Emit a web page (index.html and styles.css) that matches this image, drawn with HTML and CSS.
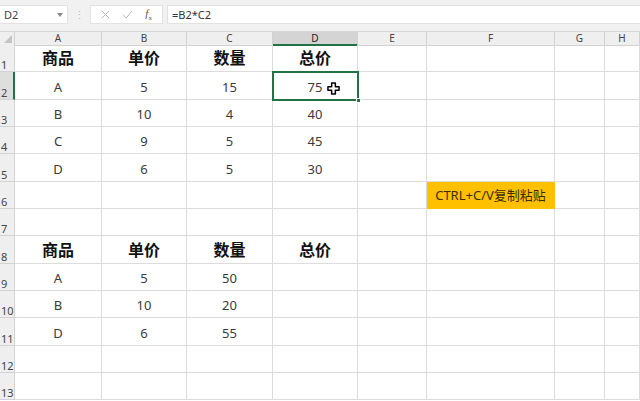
FILE: index.html
```html
<!DOCTYPE html>
<html lang="zh-CN">
<head>
    <meta charset="UTF-8">
    <title>Sheet1</title>
    <link rel="stylesheet" href="styles.css">
</head>
<body>
    <!-- Formula bar -->
    <div class="toolbar">
        <div class="name-box">
            <span>D2</span>
            <svg class="caret" viewBox="0 0 6 4" width="6" height="4"><path d="M0 0h6L3 4z" fill="#888"/></svg>
        </div>
        <div class="dots">⋮</div>
        <div class="fx-box">
            <svg viewBox="0 0 10 10" width="9" height="9"><path d="M1 1l8 8M9 1l-8 8" stroke="#b5b5b5" stroke-width="1.1" fill="none"/></svg>
            <svg viewBox="0 0 12 10" width="11" height="9"><path d="M1 5l3.5 4L11 1" stroke="#b5b5b5" stroke-width="1.1" fill="none"/></svg>
            <span class="fx"><i>f</i><sub>x</sub></span>
        </div>
        <div class="formula">=B2*C2</div>
    </div>

    <!-- Grid -->
    <div class="sheet">
        <div class="row head">
            <div class="corner"><svg viewBox="0 0 8 8" width="8" height="8"><path d="M8 0v8H0z" fill="#c4c4c4"/></svg></div>
            <div class="col">A</div><div class="col">B</div><div class="col">C</div><div class="col active">D</div>
            <div class="col">E</div><div class="col">F</div><div class="col">G</div><div class="col">H</div>
        </div>

        <div class="row">
            <div class="num">1</div>
            <div class="cell title">商品</div><div class="cell title">单价</div><div class="cell title">数量</div><div class="cell title">总价</div>
            <div class="cell"></div><div class="cell"></div><div class="cell"></div><div class="cell"></div>
        </div>
        <div class="row">
            <div class="num active">2</div>
            <div class="cell">A</div><div class="cell">5</div><div class="cell">15</div>
            <div class="cell selected">75
                <svg class="pointer" viewBox="0 0 14 14" width="13" height="13"><path d="M5 1h4v4h4v4H9v4H5V9H1V5h4z" fill="#fff" stroke="#000" stroke-width="1.6" stroke-linejoin="round"/></svg>
                <span class="handle"></span>
            </div>
            <div class="cell"></div><div class="cell"></div><div class="cell"></div><div class="cell"></div>
        </div>
        <div class="row">
            <div class="num">3</div>
            <div class="cell">B</div><div class="cell">10</div><div class="cell">4</div><div class="cell">40</div>
            <div class="cell"></div><div class="cell"></div><div class="cell"></div><div class="cell"></div>
        </div>
        <div class="row">
            <div class="num">4</div>
            <div class="cell">C</div><div class="cell">9</div><div class="cell">5</div><div class="cell">45</div>
            <div class="cell"></div><div class="cell"></div><div class="cell"></div><div class="cell"></div>
        </div>
        <div class="row">
            <div class="num">5</div>
            <div class="cell">D</div><div class="cell">6</div><div class="cell">5</div><div class="cell">30</div>
            <div class="cell"></div><div class="cell"></div><div class="cell"></div><div class="cell"></div>
        </div>
        <div class="row">
            <div class="num">6</div>
            <div class="cell"></div><div class="cell"></div><div class="cell"></div><div class="cell"></div>
            <div class="cell"></div><div class="cell note">CTRL+C/V复制粘贴</div><div class="cell"></div><div class="cell"></div>
        </div>
        <div class="row">
            <div class="num">7</div>
            <div class="cell"></div><div class="cell"></div><div class="cell"></div><div class="cell"></div>
            <div class="cell"></div><div class="cell"></div><div class="cell"></div><div class="cell"></div>
        </div>
        <div class="row">
            <div class="num">8</div>
            <div class="cell title">商品</div><div class="cell title">单价</div><div class="cell title">数量</div><div class="cell title">总价</div>
            <div class="cell"></div><div class="cell"></div><div class="cell"></div><div class="cell"></div>
        </div>
        <div class="row">
            <div class="num">9</div>
            <div class="cell">A</div><div class="cell">5</div><div class="cell">50</div><div class="cell"></div>
            <div class="cell"></div><div class="cell"></div><div class="cell"></div><div class="cell"></div>
        </div>
        <div class="row">
            <div class="num">10</div>
            <div class="cell">B</div><div class="cell">10</div><div class="cell">20</div><div class="cell"></div>
            <div class="cell"></div><div class="cell"></div><div class="cell"></div><div class="cell"></div>
        </div>
        <div class="row">
            <div class="num">11</div>
            <div class="cell">D</div><div class="cell">6</div><div class="cell">55</div><div class="cell"></div>
            <div class="cell"></div><div class="cell"></div><div class="cell"></div><div class="cell"></div>
        </div>
        <div class="row">
            <div class="num">12</div>
            <div class="cell"></div><div class="cell"></div><div class="cell"></div><div class="cell"></div>
            <div class="cell"></div><div class="cell"></div><div class="cell"></div><div class="cell"></div>
        </div>
        <div class="row">
            <div class="num">13</div>
            <div class="cell"></div><div class="cell"></div><div class="cell"></div><div class="cell"></div>
            <div class="cell"></div><div class="cell"></div><div class="cell"></div><div class="cell"></div>
        </div>
    </div>
</body>
</html>
```

FILE: styles.css
```css
* {
    margin: 0;
    padding: 0;
    box-sizing: border-box;
}

body {
    width: 640px;
    height: 401px;
    overflow: hidden;
    background: #fff;
    font-family: "Noto Sans", "Noto Sans CJK SC", sans-serif;
    color: #333;
}

/* Formula bar */
.toolbar {
    height: 32px;
    background: #f1f1f1;
    border-bottom: 1px solid #d6d6d6;
    display: flex;
    align-items: flex-start;
    padding-top: 5px;
}

.name-box {
    width: 68px;
    height: 19px;
    background: #fff;
    border: 1px solid #e2e2e2;
    border-left: none;
    display: flex;
    align-items: center;
    justify-content: space-between;
    padding: 0 3px 0 4px;
    font-size: 11px;
    color: #444;
}

.caret {
    margin-right: 1px;
}

.dots {
    width: 22px;
    height: 19px;
    text-align: center;
    font-size: 11px;
    line-height: 19px;
    color: #bbb;
}

.fx-box {
    width: 73px;
    height: 19px;
    background: #fff;
    border: 1px solid #e2e2e2;
    display: flex;
    align-items: center;
    justify-content: space-around;
    padding: 0 4px;
}

.fx {
    font-family: "Liberation Serif", serif;
    font-size: 11px;
    color: #555;
}

.fx sub {
    font-size: 7px;
}

.formula {
    flex: 1;
    height: 19px;
    margin-left: 4px;
    background: #fff;
    border: 1px solid #e2e2e2;
    border-right: none;
    font-size: 11px;
    line-height: 17px;
    padding-left: 4px;
    color: #333;
}

/* Grid */
.sheet {
    display: flex;
    flex-direction: column;
}

.row {
    display: grid;
    grid-template-columns: 15px 87px 85px 86px 85px 69px 128px 50px 35px;
    height: 27.33px;
}

.row.head {
    height: 13px;
}

.corner,
.col,
.num {
    background: #efefef;
    border-right: 1px solid #d2d2d2;
    border-bottom: 1px solid #d2d2d2;
    color: #444;
    font-size: 10px;
}

.corner {
    display: flex;
    align-items: flex-end;
    justify-content: flex-end;
    padding: 0 2px 2px 0;
}

.col {
    text-align: center;
    line-height: 12px;
}

.col.active {
    background: #d4d4d4;
    border-bottom: 2px solid #217346;
    color: #222;
}

.num {
    display: flex;
    align-items: flex-end;
    padding: 0 0 0 1px;
    font-size: 11px;
    line-height: 13px;
}

.num.active {
    background: #dedede;
    border-right: 2px solid #217346;
}

.cell {
    border-right: 1px solid #dcdcdc;
    border-bottom: 1px solid #dcdcdc;
    display: flex;
    align-items: flex-end;
    justify-content: center;
    padding-bottom: 3px;
    font-size: 13px;
    color: #3a3a3a;
    position: relative;
}

.cell.title {
    font-family: "Noto Sans CJK SC", sans-serif;
    font-weight: bold;
    font-size: 16px;
    color: #111;
    padding-bottom: 2px;
}

.cell.selected {
    outline: 2px solid #217346;
    outline-offset: -1px;
    z-index: 1;
}

.pointer {
    position: absolute;
    left: 54px;
    top: 10px;
}

.handle {
    position: absolute;
    right: -4px;
    bottom: -4px;
    width: 5px;
    height: 5px;
    background: #217346;
    border: 1px solid #fff;
}

.cell.note {
    background: #ffc000;
    border-color: #ffc000;
    color: #3a2e00;
    padding-bottom: 4px;
}
```
